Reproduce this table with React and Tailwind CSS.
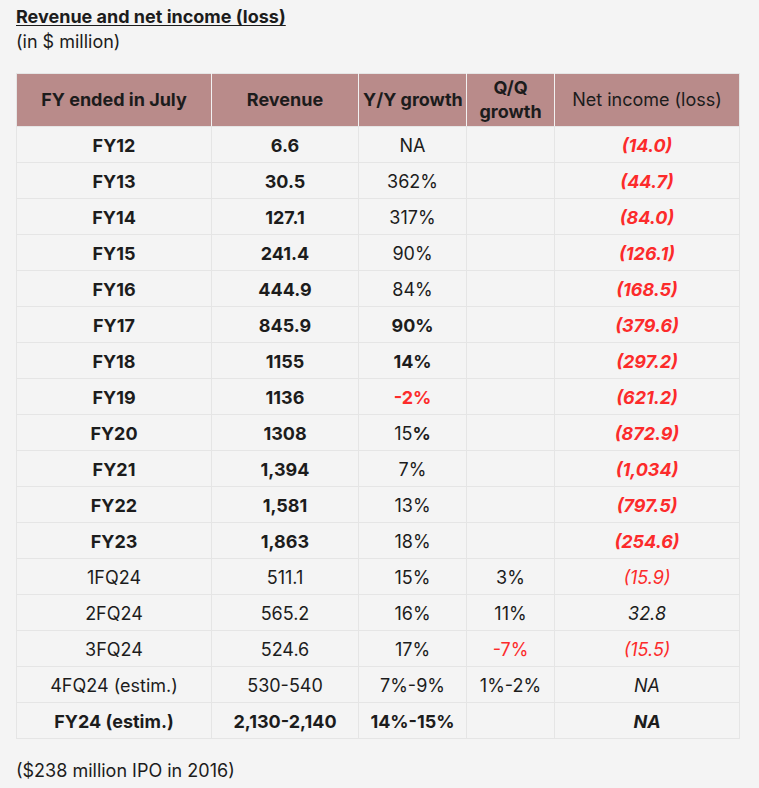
import React from 'react';

const RED = 'text-[#fc2b2b]';

// label, revenue, yoy, qoq, net — bold flags per row
const rows = [
    { fy: 'FY12', rev: '6.6', yoy: 'NA', net: '(14.0)' },
    { fy: 'FY13', rev: '30.5', yoy: '362%', net: '(44.7)' },
    { fy: 'FY14', rev: '127.1', yoy: '317%', net: '(84.0)' },
    { fy: 'FY15', rev: '241.4', yoy: '90%', net: '(126.1)' },
    { fy: 'FY16', rev: '444.9', yoy: '84%', net: '(168.5)' },
    { fy: 'FY17', rev: '845.9', yoy: '90%', yoyBold: true, net: '(379.6)' },
    { fy: 'FY18', rev: '1155', yoy: '14%', yoyBold: true, net: '(297.2)' },
    { fy: 'FY19', rev: '1136', yoy: '-2%', yoyBold: true, yoyRed: true, net: '(621.2)' },
    { fy: 'FY20', rev: '1308', yoy: '15', yoyPct: true, net: '(872.9)' },
    { fy: 'FY21', rev: '1,394', yoy: '7%', net: '(1,034)' },
    { fy: 'FY22', rev: '1,581', yoy: '13%', net: '(797.5)' },
    { fy: 'FY23', rev: '1,863', yoy: '18%', net: '(254.6)' },
];

const quarters = [
    { fy: '1FQ24', rev: '511.1', yoy: '15%', qoq: '3%', net: '(15.9)', netRed: true },
    { fy: '2FQ24', rev: '565.2', yoy: '16%', qoq: '11%', net: '32.8' },
    { fy: '3FQ24', rev: '524.6', yoy: '17%', qoq: '-7%', qoqRed: true, net: '(15.5)', netRed: true },
    { fy: '4FQ24 (estim.)', rev: '530-540', yoy: '7%-9%', qoq: '1%-2%', net: 'NA' },
];

const td = 'border border-[#e5e5e5] h-9 p-0 pt-[2px] text-center align-middle';
const th = 'border border-[#f2f2f2] border-b-[#e5e5e5] h-[53px] px-1 text-center align-middle leading-6';

const App = () => {
    return (
        <div
            className="min-h-screen bg-[#f4f4f4] px-4 pt-[5px] text-[18px] text-[#1c1c1c]"
            style={{ fontFamily: 'Inter, "Liberation Sans", sans-serif' }}
        >
            <div className="font-bold underline underline-offset-2 leading-6">Revenue and net income (loss)</div>
            <div className="leading-6 mt-[1px]">(in $ million)</div>

            <table className="mt-[19px] border-collapse table-fixed w-[723px]">
                <colgroup>
                    <col className="w-[195px]" />
                    <col className="w-[147px]" />
                    <col className="w-[108px]" />
                    <col className="w-[88px]" />
                    <col className="w-[185px]" />
                </colgroup>
                <thead>
                    <tr className="bg-[#b98b8a]">
                        <th className={`${th} border-t-[#e5e5e5] border-l-[#e5e5e5] font-bold`}>FY ended in July</th>
                        <th className={`${th} border-t-[#e5e5e5] font-bold`}>Revenue</th>
                        <th className={`${th} border-t-[#e5e5e5] font-bold whitespace-nowrap`}>Y/Y growth</th>
                        <th className={`${th} border-t-[#e5e5e5] font-bold`}>Q/Q growth</th>
                        <th className={`${th} border-t-[#e5e5e5] border-r-[#e5e5e5] font-normal`}>Net income (loss)</th>
                    </tr>
                </thead>
                <tbody>
                    {rows.map((r) => (
                        <tr key={r.fy}>
                            <td className={`${td} font-bold`}>{r.fy}</td>
                            <td className={`${td} font-bold`}>{r.rev}</td>
                            <td className={`${td} ${r.yoyBold ? 'font-bold' : ''} ${r.yoyRed ? RED : ''}`}>
                                {r.yoy}
                                {r.yoyPct && <span className="font-bold">%</span>}
                            </td>
                            <td className={td}></td>
                            <td className={`${td} font-bold italic ${RED}`}>{r.net}</td>
                        </tr>
                    ))}
                    {quarters.map((q) => (
                        <tr key={q.fy}>
                            <td className={td}>{q.fy}</td>
                            <td className={td}>{q.rev}</td>
                            <td className={td}>{q.yoy}</td>
                            <td className={`${td} ${q.qoqRed ? RED : ''}`}>{q.qoq}</td>
                            <td className={`${td} italic ${q.netRed ? RED : ''}`}>{q.net}</td>
                        </tr>
                    ))}
                    <tr>
                        <td className={`${td} font-bold`}>FY24 (estim.)</td>
                        <td className={`${td} font-bold`}>2,130-2,140</td>
                        <td className={`${td} font-bold`}>14%-15%</td>
                        <td className={td}></td>
                        <td className={`${td} font-bold italic`}>NA</td>
                    </tr>
                </tbody>
            </table>

            <div className="mt-5 leading-6">($238 million IPO in 2016)</div>
        </div>
    );
};

export default App;
